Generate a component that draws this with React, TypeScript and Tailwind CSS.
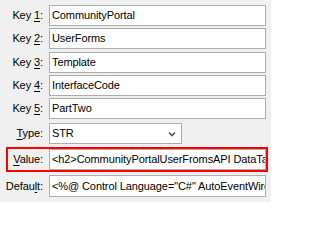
import React from 'react';

const font = { fontFamily: '"Liberation Sans", Arial, sans-serif' };

// label text with the mnemonic char underlined
const Label = ({ before, mnemonic, after }: { before: string; mnemonic: string; after: string }) => (
    <span className="whitespace-pre">
        {before}
        <u className="underline-offset-[2px]">{mnemonic}</u>
        {after}
    </span>
);

const TextBox = ({ value, className = '' }: { value: string; className?: string }) => (
    <div
        className={`flex items-center h-[21px] w-[217px] bg-white border border-[#adadad] pl-[2px] overflow-hidden whitespace-nowrap text-black ${className}`}
    >
        {value}
    </div>
);

const keys = [
    { n: '1', value: 'CommunityPortal', mt: 'mt-0' },
    { n: '2', value: 'UserForms', mt: 'mt-[2px]' },
    { n: '3', value: 'Template', mt: 'mt-[3px]' },
    { n: '4', value: 'InterfaceCode', mt: 'mt-[2px]' },
    { n: '5', value: 'PartTwo', mt: 'mt-[2px]' },
];

export default function App() {
    return (
        <div
            className="w-[271px] h-[202px] bg-[#f0f0f0] pt-[5px] text-[11px] tracking-[-0.1px] text-black overflow-hidden"
            style={font}
        >
            {keys.map((k) => (
                <div key={k.n} className={`flex items-center ${k.mt}`}>
                    <div className="w-[44px] text-right pr-[1px]">
                        <Label before="Key " mnemonic={k.n} after=":" />
                    </div>
                    <div className="ml-[5px]">
                        <TextBox value={k.value} />
                    </div>
                </div>
            ))}

            {/* Type */}
            <div className="flex items-center mt-[4px]">
                <div className="w-[44px] text-right pr-[1px]">
                    <Label before="" mnemonic="T" after="ype:" />
                </div>
                <div className="ml-[5px] flex items-center justify-between h-[21px] w-[133px] bg-white border border-[#adadad] pl-[2px] pr-[5px]">
                    <span>STR</span>
                    <svg width="8" height="6" viewBox="0 0 8 6" className="mt-[1px]">
                        <path d="M1 1.5 L4 4.5 L7 1.5" fill="none" stroke="#555" strokeWidth="1.6" />
                    </svg>
                </div>
            </div>

            {/* Value, highlighted */}
            <div className="flex items-center ml-[6px] mt-[3px] w-[262px] h-[25px] border-2 border-[#f00]">
                <div className="w-[36px] text-right pr-[1px]">
                    <Label before="" mnemonic="V" after="alue:" />
                </div>
                <div className="ml-[5px]">
                    <TextBox
                        value='<h2>CommunityPortalUserFromsAPI DataTable</h2>'
                        className="h-[20px]"
                    />
                </div>
            </div>

            {/* Default */}
            <div className="flex items-center mt-[3px]">
                <div className="w-[44px] text-right pr-[1px]">
                    <Label before="Defau" mnemonic="l" after="t:" />
                </div>
                <div className="ml-[5px]">
                    <TextBox value='<%@ Control Language="C#" AutoEventWireup="true" %>' className="h-[22px]" />
                </div>
            </div>
        </div>
    );
}
